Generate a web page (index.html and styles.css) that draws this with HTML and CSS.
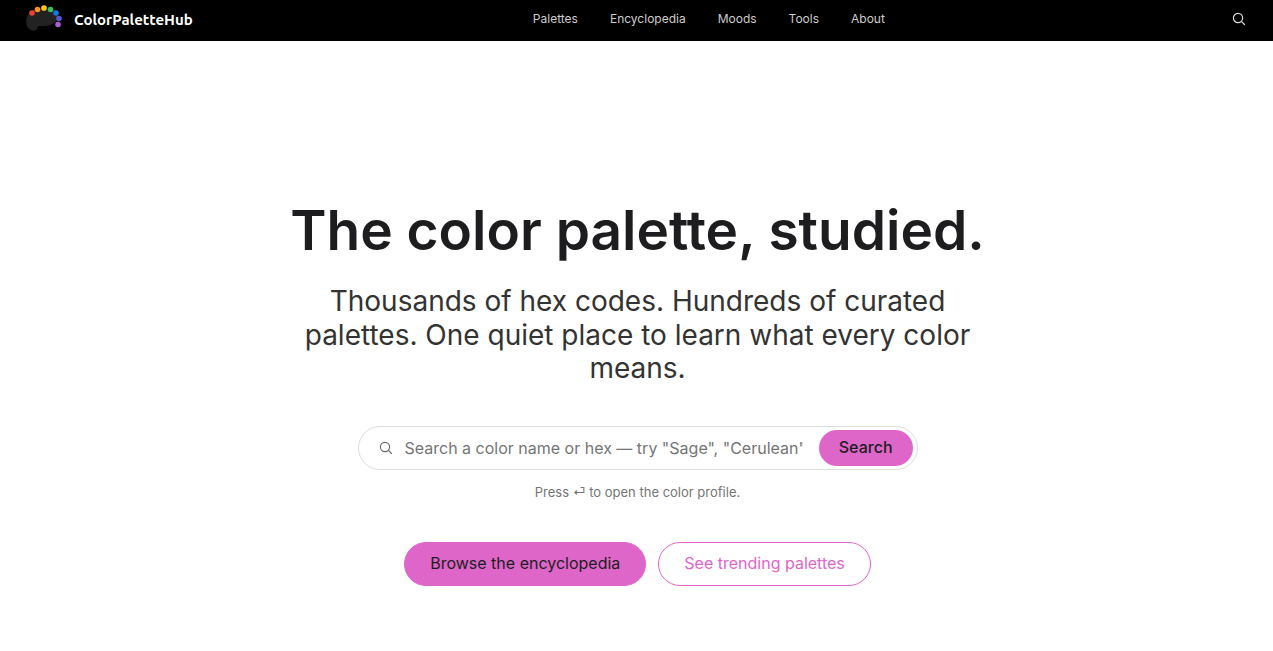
FILE: index.html
```html
<!DOCTYPE html>
<html lang="en">
<head>
<meta charset="utf-8">
<meta name="viewport" content="width=device-width, initial-scale=1">
<title>ColorPaletteHub</title>
<link rel="stylesheet" href="styles.css">
</head>
<body>
<header class="site-header">
  <a class="brand" href="#">
    <svg class="brand-mark" width="38" height="32" viewBox="0 0 38 32" aria-hidden="true">
      <path d="M1.200 21C1 15 6 9.500 14 8.500L26 8.500C31 10 34.500 14 33 18C31 22.500 27 25.500 20 26C15 26 12.500 25.500 12.500 27.500C12.500 30 10 31 7.500 30.500C3 29.500 1.200 26 1.200 21Z" fill="#222"/>
      <circle cx="7" cy="13" r="2.800" fill="#ea4335"/>
      <circle cx="12.500" cy="9.500" r="2.800" fill="#f7941d"/>
      <circle cx="19" cy="8" r="2.800" fill="#fcc812"/>
      <circle cx="25.500" cy="9.500" r="2.800" fill="#3fbf5a"/>
      <circle cx="31" cy="13" r="2.800" fill="#0f7bea"/>
      <circle cx="34" cy="18.500" r="2.800" fill="#5856c8"/>
      <circle cx="33" cy="24.500" r="2.800" fill="#a95bd5"/>
    </svg>
    <span>ColorPaletteHub</span>
  </a>
  <nav class="site-nav" aria-label="Main">
    <a href="#">Palettes</a>
    <a href="#">Encyclopedia</a>
    <a href="#">Moods</a>
    <a href="#">Tools</a>
    <a href="#">About</a>
  </nav>
  <button class="header-search" type="button" aria-label="Open search">
    <svg width="14" height="14" viewBox="0 0 14 14" fill="none" stroke="currentColor" stroke-width="1.200" stroke-linecap="round" aria-hidden="true"><circle cx="6" cy="6" r="4.600"/><path d="M9.400 9.400L12.500 12.500"/></svg>
  </button>
</header>
<main class="hero">
  <h1 class="hero-title">The color palette, studied.</h1>
  <p class="hero-lead">Thousands of hex codes. Hundreds of curated palettes. One quiet place to learn what every color means.</p>
  <form class="search">
    <svg class="search-icon" width="14" height="14" viewBox="0 0 14 14" fill="none" stroke="currentColor" stroke-width="1.100" stroke-linecap="round" aria-hidden="true"><circle cx="6" cy="6" r="4.600"/><path d="M9.400 9.400L12.500 12.500"/></svg>
    <input class="search-input" type="text" aria-label="Search a color name or hex" placeholder="Search a color name or hex — try &quot;Sage&quot;, &quot;Cerulean&quot;, or #0066CC">
    <button class="search-button" type="submit">Search</button>
  </form>
  <p class="hint">Press ⏎ to open the color profile.</p>
  <div class="actions">
    <a class="pill pill-solid" href="#">Browse the encyclopedia</a>
    <a class="pill pill-outline" href="#">See trending palettes</a>
  </div>
</main>
</body>
</html>
```

FILE: styles.css
```css
* {
  box-sizing: border-box;
}

body {
  margin: 0;
  background: #fff;
  color: #1d1d1f;
  font-family: Inter, "Liberation Sans", "DejaVu Sans", sans-serif;
  font-size: 16px;
}

a {
  text-decoration: none;
}

.site-header {
  display: flex;
  align-items: center;
  justify-content: space-between;
  padding: 0 20px 4px 24px;
  background: #000;
}

.brand {
  display: flex;
  align-items: center;
  gap: 11px;
  color: #fff;
  font-family: Ubuntu, "Noto Sans", sans-serif;
  font-size: 15px;
  font-weight: 700;
}

.brand-mark {
  margin: 0 0 5px 1px;
}

.brand span {
  padding-top: 2px;
}

.site-nav {
  display: flex;
  gap: 32px;
  font-size: 12px;
  line-height: 37px;
}

.site-nav a {
  color: #ccc;
}

.header-search {
  display: flex;
  padding: 3px 7px;
  border: 0;
  background: none;
  color: #ddd;
}

.hero {
  display: flex;
  flex-direction: column;
  align-items: center;
  padding: 159px 23px 64px 25px;
  text-align: center;
}

.hero-title {
  margin: 0;
  font-size: 55px;
  font-weight: 600;
  line-height: 60px;
}

.hero-lead {
  max-width: 700px;
  margin: 25px 0 40px;
  color: #333;
  font-size: 28px;
  line-height: 1.2;
}

.search {
  display: flex;
  align-items: center;
  width: 100%;
  max-width: 560px;
  padding: 3px 4px 3px 20px;
  border: 1px solid #ddd;
  border-radius: 22px;
}

.search-icon {
  flex: none;
  color: #666;
}

.search-input {
  flex: 1;
  min-width: 0;
  margin: 0 16px 0 12px;
  padding: 0;
  border: 0;
  outline: 0;
  background: none;
  color: #1d1d1f;
  font: inherit;
}

.search-input::placeholder {
  color: #757575;
}

.search-button {
  height: 36px;
  padding: 0 20px 2px;
  border: 0;
  border-radius: 18px;
  background: #de66c9;
  color: #1d1d1f;
  font: inherit;
  font-weight: 500;
}

.hint {
  margin: 12px 0 40px;
  color: #757575;
  font-size: 13px;
  line-height: 20px;
}

.actions {
  display: flex;
  flex-wrap: wrap;
  justify-content: center;
  gap: 12px;
}

.pill {
  padding: 9px 25px 11px;
  border: 1px solid #de66c9;
  border-radius: 22px;
  line-height: 22px;
}

.pill-solid {
  background: #de66c9;
  color: #1d1d1f;
}

.pill-outline {
  color: #de66c9;
}
```
